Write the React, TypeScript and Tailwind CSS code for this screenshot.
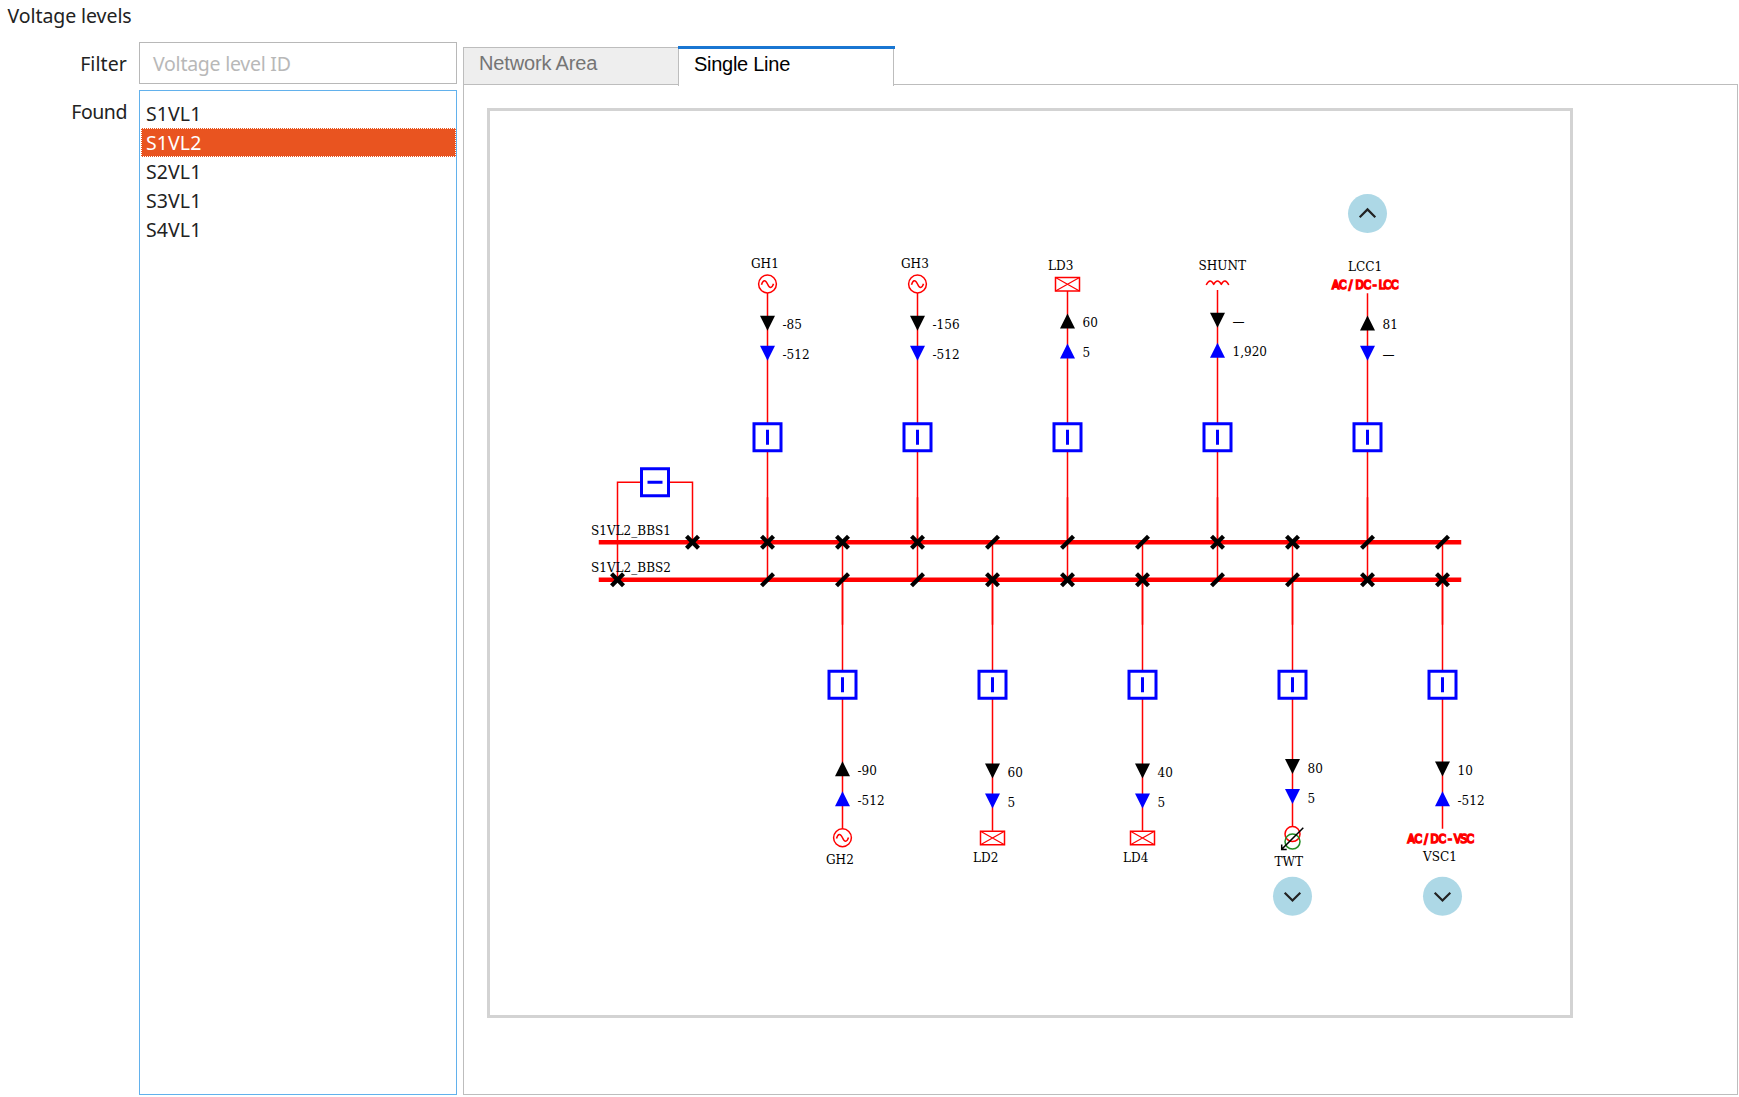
import React from 'react';

type Dir = 'up' | 'down';

interface Feeder {
  id: string;
  x: number;
  labelX: number;
  labelY: number;
  kind: 'gen' | 'load' | 'shunt' | 'lcc' | 'vsc' | 'twt';
  top: boolean;
  bus: 1 | 2;
  wire: number;
  p: { dir: Dir; y: number; ty: number; text: string };
  q: { dir: Dir; y: number; ty: number; text: string };
}

const BUS1 = 542.25;
const BUS2 = 579.75;

const feeders: Feeder[] = [
  { id: 'GH1', x: 767.5, labelX: 751, labelY: 268, kind: 'gen', top: true, bus: 1, wire: 293, p: { dir: 'down', y: 315.75, ty: 328.7, text: '-85' }, q: { dir: 'down', y: 345.75, ty: 358.7, text: '-512' } },
  { id: 'GH3', x: 917.5, labelX: 901, labelY: 268, kind: 'gen', top: true, bus: 1, wire: 293, p: { dir: 'down', y: 315.75, ty: 328.7, text: '-156' }, q: { dir: 'down', y: 345.75, ty: 358.7, text: '-512' } },
  { id: 'LD3', x: 1067.5, labelX: 1048, labelY: 270.3, kind: 'load', top: true, bus: 2, wire: 291, p: { dir: 'up', y: 314, ty: 326.7, text: '60' }, q: { dir: 'up', y: 344, ty: 356.7, text: '5' } },
  { id: 'SHUNT', x: 1217.5, labelX: 1198.5, labelY: 270.3, kind: 'shunt', top: true, bus: 1, wire: 290, p: { dir: 'down', y: 312.75, ty: 326, text: '—' }, q: { dir: 'up', y: 343.25, ty: 355.7, text: '1,920' } },
  { id: 'LCC1', x: 1367.5, labelX: 1348, labelY: 271, kind: 'lcc', top: true, bus: 2, wire: 293.3, p: { dir: 'up', y: 316, ty: 329, text: '81' }, q: { dir: 'down', y: 345.75, ty: 359, text: '—' } },
  { id: 'GH2', x: 842.5, labelX: 826, labelY: 864, kind: 'gen', top: false, bus: 1, wire: 828.7, p: { dir: 'up', y: 761.6, ty: 774.7, text: '-90' }, q: { dir: 'up', y: 791.6, ty: 804.7, text: '-512' } },
  { id: 'LD2', x: 992.5, labelX: 973, labelY: 862, kind: 'load', top: false, bus: 2, wire: 830.7, p: { dir: 'down', y: 763.4, ty: 776.7, text: '60' }, q: { dir: 'down', y: 793.4, ty: 806.7, text: '5' } },
  { id: 'LD4', x: 1142.5, labelX: 1123, labelY: 862, kind: 'load', top: false, bus: 2, wire: 830.7, p: { dir: 'down', y: 763.4, ty: 776.7, text: '40' }, q: { dir: 'down', y: 793.4, ty: 806.7, text: '5' } },
  { id: 'TWT', x: 1292.5, labelX: 1274.5, labelY: 865.7, kind: 'twt', top: false, bus: 1, wire: 826.2, p: { dir: 'down', y: 759, ty: 772.7, text: '80' }, q: { dir: 'down', y: 789, ty: 802.7, text: '5' } },
  { id: 'VSC1', x: 1442.5, labelX: 1423, labelY: 861, kind: 'vsc', top: false, bus: 2, wire: 828.7, p: { dir: 'down', y: 761.4, ty: 774.7, text: '10' }, q: { dir: 'up', y: 791.6, ty: 804.7, text: '-512' } },
];

const Disconnector = ({ x, y, closed }: { x: number; y: number; closed: boolean }) => (
  <g stroke="#000" strokeWidth={4.2} fill="none">
    <path d={`M${x - 6} ${y + 6}L${x + 6} ${y - 6}`} />
    {closed && <path d={`M${x - 6} ${y - 6}L${x + 6} ${y + 6}`} />}
  </g>
);

const Breaker = ({ x, y, flat }: { x: number; y: number; flat?: boolean }) => (
  <g stroke="#00f" strokeWidth={3}>
    <rect x={x - 13.5} y={y - 13.5} width={27} height={27} fill="#fff" />
    <path d={flat ? `M${x - 7.5} ${y}h15` : `M${x} ${y - 7.5}v15`} />
  </g>
);

const Arrow = ({ x, y, dir, color }: { x: number; y: number; dir: Dir; color: string }) => (
  <path
    fill={color}
    d={dir === 'down' ? `M${x - 7.5} ${y}h15l-7.5 15z` : `M${x - 7.5} ${y + 14.6}h15l-7.5 -15z`}
  />
);

const converterGlyphs = {
  lcc: { text: 'AC/DC-LCC', x: '1332 1338.9 1348.8 1355.4 1363.5 1372.8 1378.8 1383.5 1390.9', y: 288.6 },
  vsc: { text: 'AC/DC-VSC', x: '1407.5 1414.4 1424.3 1430.6 1438.6 1447.9 1453.9 1460.6 1466.6', y: 842.6 },
};

const Component = ({ kind, x, top }: { kind: Feeder['kind']; x: number; top: boolean }) => {
  const y = top ? 284 : 837.75;
  if (kind === 'gen')
    return (
      <g stroke="#f00" strokeWidth={1.5} fill="none">
        <circle cx={x} cy={y} r={8.9} />
        <path d={`M${x - 6} ${y + 0.8}C${x - 4.5} ${y - 4.6} ${x - 2} ${y - 4.6} ${x} ${y}S${x + 4.5} ${y + 4.6} ${x + 6} ${y - 0.2}`} />
      </g>
    );
  if (kind === 'load')
    return (
      <g stroke="#f00" strokeWidth={1.5} fill="none">
        <rect x={x - 12} y={y - 6.5} width={24} height={13.5} />
        <path strokeWidth={1.2} d={`M${x - 12} ${y - 6.5}l24 13.5M${x + 12} ${y - 6.5}l-24 13.5`} />
      </g>
    );
  if (kind === 'shunt')
    return (
      <path
        stroke="#f00"
        strokeWidth={1.5}
        fill="none"
        strokeLinejoin="round"
        d={`M${x - 11.3} 285q3.9 -7.6 7.5 -.6q3.8 -6.6 7.6 0q3.6 -7 7.5 .6`}
      />
    );
  if (kind === 'twt')
    return (
      <g fill="none" strokeWidth={1.5}>
        <circle cx={x} cy={834.1} r={7.5} stroke="#f00" />
        <circle cx={x} cy={841.6} r={7.5} stroke="#228b22" />
        <path stroke="#000" d={`M${x + 10.8} 827.8L${x - 10.5} 849M${x - 10.8} 844.5v5h5`} />
      </g>
    );
  const g = converterGlyphs[kind];
  return (
    <text x={g.x} y={g.y} className="font-['DejaVu_Sans_Condensed','DejaVu_Sans',sans-serif] text-[11.8px]" fill="#f00" stroke="#f00" strokeWidth={1.6}>
      {g.text}
    </text>
  );
};

const NavButton = ({ x, y, dir }: { x: number; y: number; dir: Dir }) => (
  <g>
    <circle cx={x} cy={y} r={19.5} fill="#add8e6" />
    <path
      d={dir === 'up' ? `M${x - 7.8} ${y + 3.6}l7.8 -7.8l7.8 7.8` : `M${x - 7.8} ${y - 3.6}l7.8 7.8l7.8 -7.8`}
      fill="none"
      stroke="#222"
      strokeWidth={2.2}
    />
  </g>
);

const Diagram = () => (
  <svg viewBox="490 111 1080 904" className="block h-[904px] w-[1080px] font-['DejaVu_Serif_Condensed','DejaVu_Serif',serif] text-[13.4px]">
    <g stroke="#f00" strokeWidth={4.5}>
      <path d={`M598.75 ${BUS1}H1461.25M598.75 ${BUS2}H1461.25`} />
    </g>
    <path d={`M617.5 ${BUS2}V482.25H692.5V${BUS1}`} fill="none" stroke="#f00" strokeWidth={1.5} />
    {feeders.map((f) => (
      <g key={f.id}>
        <g stroke="#f00" strokeWidth={1.5} fill="none">
          {f.top ? (
            <>
              <path d={`M${f.x} ${f.wire}V${BUS2}`} />
              <path d={`M${f.x} 497.25V${BUS1}`} />
            </>
          ) : (
            <>
              <path d={`M${f.x} ${BUS1}V${f.wire}`} />
              <path d={`M${f.x} ${BUS2}V624.75`} />
            </>
          )}
        </g>
        <Breaker x={f.x} y={f.top ? 437.25 : 684.75} />
        <Disconnector x={f.x} y={BUS1} closed={f.bus === 1} />
        <Disconnector x={f.x} y={BUS2} closed={f.bus === 2} />
        <Arrow x={f.x} y={f.p.y} dir={f.p.dir} color="#000" />
        <Arrow x={f.x} y={f.q.y} dir={f.q.dir} color="#00f" />
        <text x={f.x + 15} y={f.p.ty}>{f.p.text}</text>
        <text x={f.x + 15} y={f.q.ty}>{f.q.text}</text>
        <Component kind={f.kind} x={f.x} top={f.top} />
        <text x={f.labelX} y={f.labelY}>{f.id}</text>
      </g>
    ))}
    <Breaker x={655} y={482.25} flat />
    <Disconnector x={692.5} y={BUS1} closed />
    <Disconnector x={617.5} y={BUS2} closed />
    <text x={591} y={535}>S1VL2_BBS1</text>
    <text x={591} y={572}>S1VL2_BBS2</text>
    <NavButton x={1367.5} y={213.6} dir="up" />
    <NavButton x={1292.5} y={896.3} dir="down" />
    <NavButton x={1442.5} y={896.3} dir="down" />
  </svg>
);

const levels = ['S1VL1', 'S1VL2', 'S2VL1', 'S3VL1', 'S4VL1'];

export default function App() {
  return (
    <div className="flex h-[1097px] w-[1739px] flex-col overflow-hidden bg-white font-['Noto_Sans',sans-serif] text-[19.5px] text-[#222]">
      <h1 className="h-[42px] pl-[7.5px] leading-[32px] tracking-[-0.07px]">Voltage levels</h1>
      <div className="flex h-[1053px]">
        <div className="flex w-[139px] flex-col pr-3 text-right">
          <label className="h-12 leading-[43px] tracking-[0.1px]">Filter</label>
          <label className="leading-[43px] tracking-[-0.45px]">Found</label>
        </div>
        <div className="flex w-[318px] flex-col gap-1.5">
          <div className="h-[42px] border border-[#b8b8b8] pl-[13px] leading-[41px] tracking-[-0.25px] text-[#b8b8b8]">Voltage level ID</div>
          <ul className="flex-1 border border-[#62b1ec] pt-2 tracking-[0.1px]">
            {levels.map((l) =>
              l === 'S1VL2' ? (
                <li key={l} className="ml-px h-[29px] border border-dotted border-white bg-[#e95420] pl-1 leading-[28px] text-white">{l}</li>
              ) : (
                <li key={l} className="h-[29px] pl-1.5 leading-[30px]">{l}</li>
              )
            )}
          </ul>
        </div>
        <div className="ml-1.5 flex w-[1275px] flex-col pt-1">
          <div className="flex h-[38px] font-['Liberation_Sans',sans-serif] text-[20px] tracking-[-0.16px]">
            <div className="mt-px h-[38px] w-[215px] border border-r-0 border-[#bdbdbd] bg-[#eee] pl-[15px] leading-[31px] text-[#757575]">Network Area</div>
            <div className="relative z-10 h-[40px] w-[217px] border-t-[3px] border-[#1976d2]">
              <div className="mr-px h-[37px] border-x border-[#bdbdbd] bg-white pl-[15px] leading-[31px] tracking-[-0.27px] text-black">Single Line</div>
            </div>
          </div>
          <div className="flex-1 border border-[#bdbdbd] pt-[23px] pl-[23px]">
            <div className="h-[910px] w-[1086px] border-[3px] border-[#d3d3d3] tracking-normal text-black">
              <Diagram />
            </div>
          </div>
        </div>
      </div>
    </div>
  );
}
